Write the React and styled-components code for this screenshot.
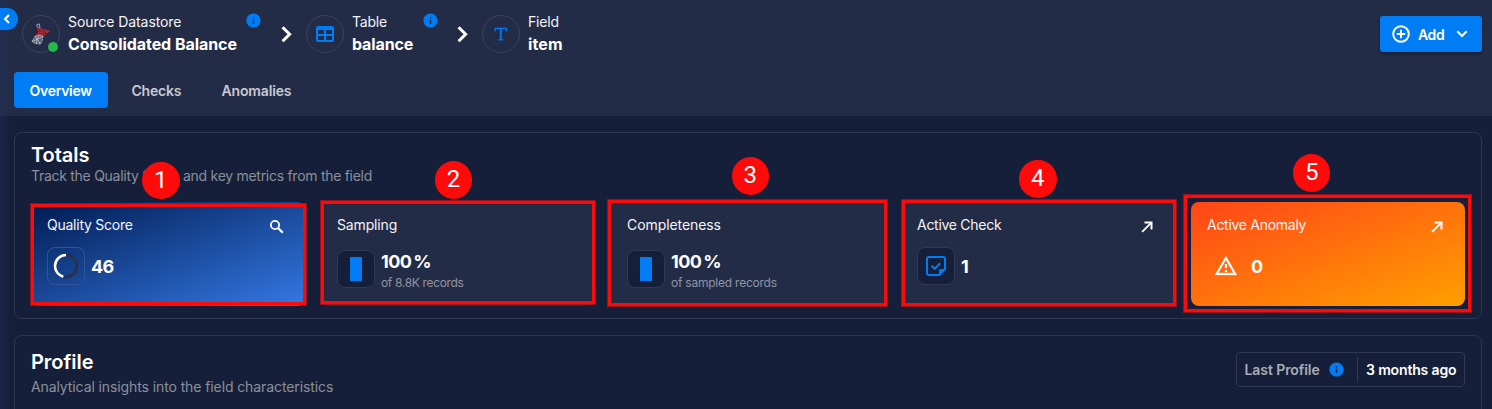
import React from 'react';
import styled, { createGlobalStyle } from 'styled-components';
import { MdInfo } from 'react-icons/md';

const GlobalStyle = createGlobalStyle`
  *, *::before, *::after { box-sizing: border-box; }
  body {
    margin: 0;
    overflow: hidden;
    background: #161f39;
    color: #f4f5f8;
    font-family: Inter, "Liberation Sans", sans-serif;
    font-size: 14px;
  }
  svg { display: block; flex: none; }
`;

const Page = styled.div`
  position: relative;
  height: 409px;
  overflow: hidden;
`;

const EdgeShade = styled.div`
  position: absolute;
  inset: 0 auto 0 0;
  width: 10px;
  background: linear-gradient(90deg, rgba(30, 50, 95, 0.4), rgba(30, 50, 95, 0));
  pointer-events: none;
`;

const Header = styled.header`
  height: 116px;
  padding: 14px 10px 0 14px;
  background: #232c47;
`;

const HeaderTop = styled.div`
  display: flex;
  justify-content: space-between;
  height: 58px;
`;

const Crumbs = styled.nav`
  display: flex;
  padding-left: 8px;
`;

const Crumb = styled.div`
  display: flex;
  width: ${(p) => p.$width}px;
`;

const CrumbIcon = styled.div`
  position: relative;
  display: flex;
  align-items: center;
  justify-content: center;
  width: 38px;
  height: 38px;
  margin: 1px 8px 0 0;
  border: 1px solid #3b435b;
  border-radius: 50%;
`;

const StatusDot = styled.span`
  position: absolute;
  right: 1px;
  bottom: 0;
  width: 10px;
  height: 10px;
  border-radius: 50%;
  background: #25b84b;
`;

const CrumbText = styled.div`
  flex: 1;
`;

const CrumbLabel = styled.div`
  display: flex;
  justify-content: space-between;
  height: 19px;
  line-height: 16px;
  letter-spacing: ${(p) => p.$track || 0}px;
  white-space: nowrap;
`;

const CrumbName = styled.div`
  font-size: 16px;
  font-weight: 700;
  line-height: 22px;
  letter-spacing: ${(p) => p.$track || 0}px;
  white-space: nowrap;
  color: #fff;
`;

const InfoIcon = styled(MdInfo)`
  width: 17px;
  height: 17px;
  color: #007df5;
`;

const LabelInfo = styled(InfoIcon)`
  margin: -2px -1px 0 0;
`;

const Separator = styled.div`
  width: ${(p) => p.$width}px;
  padding: 12px 0 0 ${(p) => p.$inset}px;
`;

const AddButton = styled.button`
  display: flex;
  align-items: center;
  width: 102px;
  height: 36px;
  margin-top: 2px;
  padding: 0 10.5px;
  border: 0;
  border-radius: 3px;
  background: #007df5;
  box-shadow: 0 2px 3px rgba(0, 0, 0, 0.35);
  color: #fff;
  font: 600 14px Inter, sans-serif;
`;

const AddLabel = styled.span`
  width: 26px;
  margin: 0 12px 0 7.5px;
  letter-spacing: -0.4px;
`;

const Tabs = styled.div`
  display: flex;
  gap: 8px;
`;

const Tab = styled.div`
  width: ${(p) => p.$width}px;
  height: 36px;
  padding-left: 15.5px;
  border-radius: 4px;
  background: ${(p) => (p.$active ? '#007df5' : 'transparent')};
  color: ${(p) => (p.$active ? '#fff' : '#c8cad1')};
  font-weight: 600;
  line-height: 38px;
  letter-spacing: ${(p) => p.$track || 0}px;
`;

const Main = styled.main`
  display: flex;
  flex-direction: column;
  gap: 16px;
  padding: 16px 10px 0 14px;
`;

const Panel = styled.section`
  height: ${(p) => p.$height}px;
  padding: ${(p) => p.$top}px 16px 0;
  border: 1px solid #2e374f;
  border-radius: 8px;
`;

const PanelHead = styled.div`
  display: flex;
  justify-content: space-between;
`;

const PanelTitle = styled.h2`
  margin: 0;
  font-size: 20px;
  font-weight: 600;
  line-height: 24px;
  letter-spacing: ${(p) => p.$track || 0}px;
  color: #fff;
`;

const PanelNote = styled.p`
  margin: ${(p) => p.$gap || 0}px 0 0;
  line-height: 18px;
  letter-spacing: ${(p) => p.$track || 0}px;
  color: #8b8f9c;
  white-space: nowrap;
`;

const Cards = styled.div`
  display: grid;
  grid-template-columns: repeat(5, 1fr);
  gap: 16px;
  margin-top: 17px;
`;

const fills = {
  plain: '#232c47',
  blue: 'linear-gradient(160deg, #001b50 0%, #3478e4 100%)',
  orange: 'linear-gradient(160deg, #ff4618 0%, #ff9f00 100%)',
};

const Card = styled.article`
  height: 104px;
  padding: 14px 16px 0;
  border-radius: 8px;
  background: ${(p) => fills[p.$tone || 'plain']};
`;

const CardHead = styled.div`
  display: flex;
  justify-content: space-between;
  height: 31px;
  padding-right: 3.5px;
  line-height: 18px;

  svg { margin-top: 1.5px; }
`;

const CardTitle = styled.span`
  letter-spacing: ${(p) => p.$track || 0}px;
`;

const CardBody = styled.div`
  display: flex;
  gap: 6px;
  padding-top: ${(p) => (p.$low ? 3 : 0)}px;
`;

const IconTile = styled.div`
  display: flex;
  align-items: center;
  justify-content: center;
  width: 38px;
  height: 38px;
  border: 1px solid ${(p) => (p.$clear ? p.$clear : '#303951')};
  border-radius: 8px;
  background: ${(p) => (p.$clear ? 'transparent' : '#161f39')};
`;

const FillBar = styled.div`
  width: 12px;
  height: 24px;
  background: #007df5;
`;

const Stat = styled.div`
  font-size: 18px;
  font-weight: 700;
  line-height: ${(p) => (p.$stacked ? 24 : 39)}px;
  letter-spacing: ${(p) => p.$track || 0}px;
  color: #fff;
`;

const StatUnit = styled.span`
  margin-left: 2px;
`;

const StatNote = styled.div`
  margin-top: -1px;
  font-size: 12px;
  line-height: 20px;
  letter-spacing: ${(p) => p.$track || 0}px;
  color: #9094a1;
`;

const LastRun = styled.div`
  display: flex;
  align-items: center;
  width: 229px;
  height: 35px;
  margin-top: 2px;
  padding: 0 7.5px;
  border: 1px solid #303951;
  border-radius: 4px;
  font-weight: 600;
  white-space: nowrap;
`;

const LastRunLabel = styled.span`
  width: 83.5px;
  color: #a9acb6;
  letter-spacing: ${(p) => p.$track || 0}px;
`;

const LastRunValue = styled.span`
  margin-left: 12px;
  padding-left: 8px;
  border-left: 1px solid #303951;
  color: #fff;
  line-height: 25px;
  letter-spacing: ${(p) => p.$track || 0}px;
`;

const CollapseHandle = styled.div`
  position: absolute;
  left: 0;
  top: 8px;
  display: flex;
  align-items: center;
  width: 18px;
  height: 22px;
  padding-left: 3px;
  border-radius: 0 11px 11px 0;
  background: #007df5;
`;

const Outline = styled.div`
  position: absolute;
  left: ${(p) => p.$x}px;
  top: ${(p) => p.$y}px;
  width: ${(p) => p.$w}px;
  height: ${(p) => p.$h}px;
  border: 3px solid #fb0b09;
  box-shadow: 0 0 0 1px rgba(251, 11, 9, 0.55);
`;

const Marker = styled.div`
  position: absolute;
  left: ${(p) => p.$cx - 18.75}px;
  top: ${(p) => p.$cy - 18.75}px;
  width: 37.5px;
  height: 37.5px;
  border-radius: 50%;
  background: #fb0b09;
  color: #fff;
  font: 24px/37px Roboto, "Liberation Sans", sans-serif;
  text-align: center;
`;

const Chevron = () => (
  <svg width="12" height="17" viewBox="0 0 12 17" fill="none" stroke="#fff" strokeWidth="3">
    <path d="M1.6 1.3 8.6 8.3 1.6 15.3" />
  </svg>
);

const DatabaseLogo = () => (
  <svg width="20" height="22" viewBox="0 0 20 22" fill="none">
    <path d="M5.5 2 8.2.8 9 4.5 7 5Z" stroke="#aeb4c2" strokeWidth=".9" />
    <path d="M6.5 4.5 10 6 18.5 8.3 15 10.5 12 13.5 9 11.5 4 13.5 8 9Z" fill="#b52329" fillOpacity=".5" stroke="#c2262c" strokeWidth="1" />
    <path d="M10 6 12 13M18 8.3 8 9.5" stroke="#c2262c" strokeWidth=".8" />
    <path d="M4 13.5 9 11.8 12 13.5 11 18 9.5 21 4.5 20.5 1 18.5Z" fill="#b9bfcb" fillOpacity=".35" stroke="#b9bfcb" strokeWidth=".9" strokeDasharray="2 .8" />
    <path d="M4 13.5 9.5 21M12 13.5 1 18.5M8 12 5 20.5" stroke="#c3c8d2" strokeWidth=".8" />
  </svg>
);

const TableIcon = () => (
  <svg width="24" height="24" viewBox="0 0 24 24" fill="#007df5">
    <path d="M5,4H19A2,2 0 0,1 21,6V18A2,2 0 0,1 19,20H5A2,2 0 0,1 3,18V6A2,2 0 0,1 5,4M5,8V12H11V8H5M13,8V12H19V8H13M5,14V18H11V14H5M13,14V18H19V14H13Z" />
  </svg>
);

const FieldIcon = () => (
  <svg width="14" height="14" viewBox="0 0 14 14" fill="none" stroke="#007df5">
    <path d="M1 4.2 1.3 1.3H12.2L12.5 4.2" strokeWidth="1.3" />
    <path d="M6.75 1.2V12.5" strokeWidth="1.8" />
    <path d="M4.4 12.8H9.2" strokeWidth="1.2" />
  </svg>
);

const PlusCircleIcon = () => (
  <svg width="20" height="20" viewBox="0 0 20 20" fill="none" stroke="#fff" strokeWidth="1.9">
    <circle cx="10" cy="10" r="7.8" />
    <path d="M10 5.8V14.2M5.8 10H14.2" />
  </svg>
);

const SearchIcon = () => (
  <svg width="18" height="18" viewBox="0 0 18 18" fill="none" stroke="#fff">
    <circle cx="7" cy="7" r="4.1" strokeWidth="1.8" />
    <path d="M10 10 14.8 14.8" strokeWidth="2.2" />
  </svg>
);

const ArrowIcon = () => (
  <svg width="18" height="18" viewBox="0 0 24 24" fill="#fff">
    <path d="M5,17.59L15.59,7H9V5H19V15H17V8.41L6.41,19L5,17.59Z" stroke="#fff" strokeWidth=".6" />
  </svg>
);

const ScoreRing = () => (
  <svg width="26" height="26" viewBox="0 0 26 26" fill="none" strokeWidth="2.6">
    <circle cx="13" cy="13" r="11" stroke="#29314a" />
    <circle cx="13" cy="13" r="11" stroke="#fff" pathLength="100" strokeDasharray="46 54" transform="rotate(-90 13 13) matrix(1 0 0 -1 0 26)" />
  </svg>
);

const CheckNoteIcon = () => (
  <svg width="22" height="22" viewBox="0 0 22 22" fill="none" stroke="#007df5" strokeWidth="2">
    <path d="M14 20H4Q2 20 2 18V4Q2 2 4 2H18Q20 2 20 4V14Z" strokeLinejoin="round" />
    <path d="M14 20V16Q14 14 16 14H20Z" fill="#007df5" stroke="none" />
    <path d="M6.5 10.8 9.7 13.8 15.2 8.2" />
  </svg>
);

const AlertIcon = () => (
  <svg width="24" height="24" viewBox="0 0 24 24" fill="#fff" stroke="#fff" strokeWidth=".3">
    <path d="M12,2L1,21H23M12,6L19.53,19H4.47M11,10V14H13V10M11,16V18H13V16" />
  </svg>
);

const outlines = [
  [31, 204, 275, 101],
  [321, 201, 274, 103],
  [608, 200, 279, 106],
  [902, 200, 274, 106],
  [1184, 195, 287, 117],
];

const markers = [
  [160.8, 180.6],
  [453.4, 179.9],
  [750.3, 176.2],
  [1037.8, 179],
  [1311.7, 173],
];

function App() {
  return (
    <Page>
      <GlobalStyle />
      <Header>
        <HeaderTop>
          <Crumbs>
            <Crumb $width={239}>
              <CrumbIcon><DatabaseLogo /><StatusDot /></CrumbIcon>
              <CrumbText>
                <CrumbLabel $track={-0.08}>Source Datastore <LabelInfo /></CrumbLabel>
                <CrumbName $track={-0.05}>Consolidated Balance</CrumbName>
              </CrumbText>
            </Crumb>
            <Separator $width={45} $inset={20}><Chevron /></Separator>
            <Crumb $width={131.5}>
              <CrumbIcon><TableIcon /></CrumbIcon>
              <CrumbText>
                <CrumbLabel $track={-0.2}>Table <LabelInfo /></CrumbLabel>
                <CrumbName $track={-0.12}>balance</CrumbName>
              </CrumbText>
            </Crumb>
            <Separator $width={44.5} $inset={19.5}><Chevron /></Separator>
            <Crumb $width={90}>
              <CrumbIcon><FieldIcon /></CrumbIcon>
              <CrumbText>
                <CrumbLabel $track={-0.2}>Field</CrumbLabel>
                <CrumbName $track={0.15}>item</CrumbName>
              </CrumbText>
            </Crumb>
          </Crumbs>
          <AddButton>
            <PlusCircleIcon />
            <AddLabel>Add</AddLabel>
            <svg width="12" height="8" viewBox="0 0 12 8" fill="none" stroke="#fff" strokeWidth="2">
              <path d="M1.3 1.3 6 6 10.7 1.3" />
            </svg>
          </AddButton>
        </HeaderTop>
        <Tabs>
          <Tab $active $width={94} $track={-0.28}>Overview</Tab>
          <Tab $width={82} $track={-0.2}>Checks</Tab>
          <Tab $width={102} $track={-0.15}>Anomalies</Tab>
        </Tabs>
      </Header>

      <Main>
        <Panel $height={187} $top={10}>
          <PanelTitle $track={-0.05}>Totals</PanelTitle>
          <PanelNote $track={-0.28}>Track the Quality Score and key metrics from the field</PanelNote>
          <Cards>
            <Card $tone="blue">
              <CardHead><CardTitle $track={-0.25}>Quality Score</CardTitle><SearchIcon /></CardHead>
              <CardBody>
                <IconTile $clear="#2f5593"><ScoreRing /></IconTile>
                <Stat $track={-0.7}>46</Stat>
              </CardBody>
            </Card>
            <Card>
              <CardHead><CardTitle $track={-0.15}>Sampling</CardTitle></CardHead>
              <CardBody $low>
                <IconTile><FillBar /></IconTile>
                <div>
                  <Stat $stacked $track={-0.6}>100<StatUnit>%</StatUnit></Stat>
                  <StatNote $track={-0.34}>of 8.8K records</StatNote>
                </div>
              </CardBody>
            </Card>
            <Card>
              <CardHead><CardTitle $track={-0.08}>Completeness</CardTitle></CardHead>
              <CardBody $low>
                <IconTile><FillBar /></IconTile>
                <div>
                  <Stat $stacked $track={-0.6}>100<StatUnit>%</StatUnit></Stat>
                  <StatNote $track={-0.23}>of sampled records</StatNote>
                </div>
              </CardBody>
            </Card>
            <Card>
              <CardHead><CardTitle $track={-0.28}>Active Check</CardTitle><ArrowIcon /></CardHead>
              <CardBody>
                <IconTile><CheckNoteIcon /></IconTile>
                <Stat>1</Stat>
              </CardBody>
            </Card>
            <Card $tone="orange">
              <CardHead><CardTitle $track={-0.28}>Active Anomaly</CardTitle><ArrowIcon /></CardHead>
              <CardBody>
                <IconTile $clear="transparent"><AlertIcon /></IconTile>
                <Stat>0</Stat>
              </CardBody>
            </Card>
          </Cards>
        </Panel>
        <Panel $height={200} $top={14}>
          <PanelHead>
            <div>
              <PanelTitle $track={-0.05}>Profile</PanelTitle>
              <PanelNote $gap={4} $track={-0.1}>Analytical insights into the field characteristics</PanelNote>
            </div>
            <LastRun>
              <LastRunLabel $track={-0.08}>Last Profile</LastRunLabel>
              <InfoIcon />
              <LastRunValue $track={-0.15}>3 months ago</LastRunValue>
            </LastRun>
          </PanelHead>
        </Panel>
      </Main>

      <EdgeShade />
      <CollapseHandle>
        <svg width="8" height="10" viewBox="0 0 8 10" fill="none" stroke="#fff" strokeWidth="2">
          <path d="M6 1 2 5 6 9" />
        </svg>
      </CollapseHandle>
      {outlines.map(([x, y, w, h]) => (
        <Outline key={x} $x={x} $y={y} $w={w} $h={h} />
      ))}
      {markers.map(([cx, cy], i) => (
        <Marker key={cx} $cx={cx} $cy={cy}>{i + 1}</Marker>
      ))}
    </Page>
  );
}

export default App;
